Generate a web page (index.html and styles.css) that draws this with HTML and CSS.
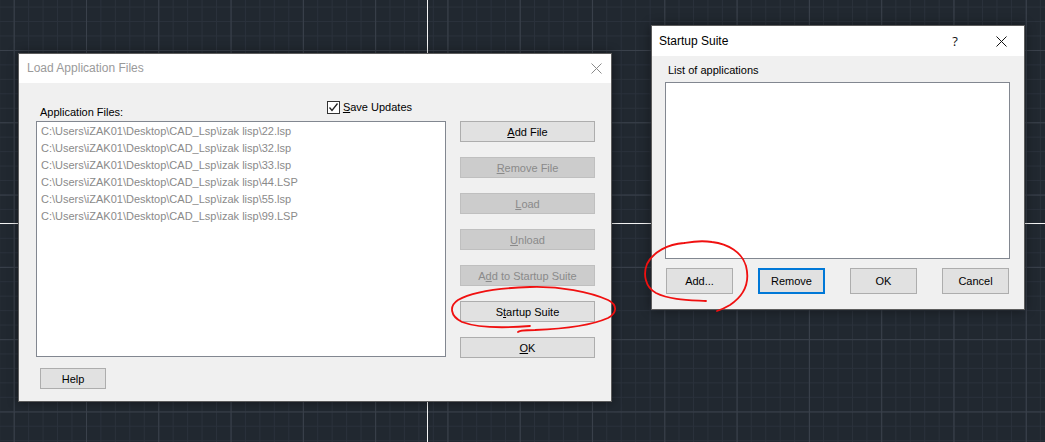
FILE: index.html
```html
<!DOCTYPE html>
<html lang="en">
<head>
  <meta charset="UTF-8">
  <meta name="viewport" content="width=device-width, initial-scale=1.0">
  <title>Load Application Files</title>
  <link rel="stylesheet" href="styles.css">
</head>
<body>
  <div class="desktop">
    <div class="cross-v"></div>
    <div class="cross-h"></div>

    <!-- Load Application Files (inactive) -->
    <div class="dialog dialog-load inactive">
      <div class="titlebar">
        <span class="title">Load Application Files</span>
        <span class="caption-btn small">
          <svg width="11" height="11" viewBox="0 0 11 11"><path d="M0.5 0.5 L10.5 10.5 M10.5 0.5 L0.5 10.5" stroke="#8a8a8a" stroke-width="1"/></svg>
        </span>
      </div>
      <div class="body">
        <div class="main">
          <div class="files">
            <div class="files-head">
              <span class="label">Application Files:</span>
              <label class="check">
                <span class="box">
                  <svg width="11" height="11" viewBox="0 0 11 11"><path d="M1.5 5.5 L4 8.5 L9.5 1.5" fill="none" stroke="#222" stroke-width="1.3"/></svg>
                </span>
                <span><u>S</u>ave Updates</span>
              </label>
            </div>
            <div class="listbox files-list">
              <div class="item">C:\Users\iZAK01\Desktop\CAD_Lsp\izak lisp\22.lsp</div>
              <div class="item">C:\Users\iZAK01\Desktop\CAD_Lsp\izak lisp\32.lsp</div>
              <div class="item">C:\Users\iZAK01\Desktop\CAD_Lsp\izak lisp\33.lsp</div>
              <div class="item">C:\Users\iZAK01\Desktop\CAD_Lsp\izak lisp\44.LSP</div>
              <div class="item">C:\Users\iZAK01\Desktop\CAD_Lsp\izak lisp\55.lsp</div>
              <div class="item">C:\Users\iZAK01\Desktop\CAD_Lsp\izak lisp\99.LSP</div>
            </div>
          </div>
          <div class="actions">
            <button class="btn"><u>A</u>dd File</button>
            <button class="btn" disabled><u>R</u>emove File</button>
            <button class="btn" disabled><u>L</u>oad</button>
            <button class="btn" disabled><u>U</u>nload</button>
            <button class="btn" disabled>A<u>d</u>d to Startup Suite</button>
            <button class="btn">S<u>t</u>artup Suite</button>
            <button class="btn"><u>O</u>K</button>
          </div>
        </div>
        <div class="footer">
          <button class="btn btn-help">Help</button>
        </div>
      </div>
    </div>

    <!-- Startup Suite (active) -->
    <div class="dialog dialog-suite">
      <div class="titlebar">
        <span class="title">Startup Suite</span>
        <span class="caption-btn help">?</span>
        <span class="caption-btn">
          <svg width="11" height="11" viewBox="0 0 11 11"><path d="M0.5 0.5 L10.5 10.5 M10.5 0.5 L0.5 10.5" stroke="#111" stroke-width="1"/></svg>
        </span>
      </div>
      <div class="body">
        <div class="label suite-label">List of applications</div>
        <div class="listbox suite-list"></div>
        <div class="suite-buttons">
          <button class="btn btn-wide">Add...</button>
          <button class="btn btn-wide focused">Remove</button>
          <button class="btn btn-wide">OK</button>
          <button class="btn btn-wide">Cancel</button>
        </div>
      </div>
    </div>

    <!-- red hand-drawn marks -->
    <svg class="marks" width="1045" height="442" viewBox="0 0 1045 442">
      <path d="M530 326 C505 328 478 328 462 322 C450 316 449 306 458 300 C472 292 500 288 530 287 C560 286 590 292 608 300 C618 305 617 313 608 318 C590 326 560 329 535 330 C525 330 518 331 518 332" />
      <path d="M706 301 C690 300 670 300 656 293 C645 287 643 274 647 264 C653 252 668 244 684 243 C690 242 700 240 712 242 C728 244 742 252 746 266 C750 282 745 295 730 305 C725 308 720 310 717 311" />
    </svg>
  </div>
</body>
</html>
```

FILE: styles.css
```css
:root {
  --canvas-bg: #212830;
  --grid-minor: #2a313b;
  --grid-major: #3a414b;
  --face: #f0f0f0;
  --btn-bg: #e1e1e1;
  --btn-border: #adadad;
  --btn-off-bg: #cccccc;
  --btn-off-border: #bfbfbf;
  --btn-off-text: #8a8a8a;
  --list-border: #828790;
  --focus: #0078d7;
}

* {
  box-sizing: border-box;
}

body {
  margin: 0;
  padding: 0;
  font-family: "Liberation Sans", Arial, sans-serif;
  font-size: 11px;
  color: #000;
  background: var(--canvas-bg);
  overflow: hidden;
}

.desktop {
  position: relative;
  width: 1045px;
  height: 442px;
  background-color: var(--canvas-bg);
  background-image:
    linear-gradient(to right, var(--grid-major) 1px, transparent 1px),
    linear-gradient(to bottom, var(--grid-major) 1px, transparent 1px),
    linear-gradient(to right, var(--grid-minor) 1px, transparent 1px),
    linear-gradient(to bottom, var(--grid-minor) 1px, transparent 1px);
  background-size:
    72.3px 100%,
    100% 72.3px,
    14.46px 100%,
    100% 14.46px;
  background-position:
    13.7px 0,
    0 50px,
    13.7px 0,
    0 6.6px;
}

.cross-v {
  position: absolute;
  left: 427px;
  top: 0;
  width: 1px;
  height: 442px;
  background: #f4f4f4;
}

.cross-h {
  position: absolute;
  left: 0;
  top: 223px;
  width: 1045px;
  height: 1px;
  background: #f4f4f4;
}

.dialog {
  position: absolute;
  display: flex;
  flex-direction: column;
  background: var(--face);
  border: 1px solid #5c5c5c;
  box-shadow: 0 0 10px rgba(0, 0, 0, 0.45);
}

.titlebar {
  display: flex;
  align-items: center;
  height: 30px;
  background: #fff;
  flex-shrink: 0;
}

.title {
  flex: 1;
  font-size: 12px;
  line-height: 30px;
  color: #000;
}

.inactive .title {
  color: #9a9a9a;
}

.caption-btn {
  display: flex;
  align-items: center;
  justify-content: center;
  width: 46px;
  height: 30px;
  font-size: 14px;
  color: #111;
}

.caption-btn.small {
  width: 29px;
}

.caption-btn.help {
  font-family: "Open Sans", "Liberation Sans", sans-serif;
  font-size: 13px;
}

.label {
  line-height: 16px;
}

.listbox {
  background: #fff;
  border: 1px solid var(--list-border);
}

.btn {
  display: flex;
  align-items: center;
  justify-content: center;
  margin: 0;
  padding: 0;
  font-family: inherit;
  font-size: 11px;
  color: #000;
  background: var(--btn-bg);
  border: 1px solid var(--btn-border);
}

.btn:disabled {
  background: var(--btn-off-bg);
  border-color: var(--btn-off-border);
  color: var(--btn-off-text);
}

/* Load Application Files */

.dialog-load {
  left: 18px;
  top: 53px;
  width: 594px;
  height: 349px;
}

.dialog-load .titlebar {
  padding-left: 8px;
  height: 29px;
}

.dialog-load .title {
  line-height: 29px;
}

.dialog-load .body {
  padding: 0 0 0 17px;
}

.main {
  display: flex;
  gap: 14px;
}

.files {
  width: 410px;
}

.files-head {
  display: flex;
  align-items: flex-end;
  height: 38px;
}

.files-head .label {
  padding-left: 4px;
  margin-bottom: 1px;
}

.check {
  display: flex;
  align-items: center;
  gap: 3px;
  margin-left: auto;
  margin-right: 34px;
  margin-bottom: 7px;
  line-height: 14px;
}

.box {
  display: flex;
  align-items: center;
  justify-content: center;
  width: 13px;
  height: 13px;
  background: #fff;
  border: 1px solid #333;
}

.files-list {
  height: 236px;
  padding: 1px 0 0 4px;
}

.item {
  line-height: 17px;
  color: #8a8a8a;
  white-space: nowrap;
}

.actions {
  display: flex;
  flex-direction: column;
  gap: 15px;
  width: 135px;
  padding-top: 38px;
}

.actions .btn {
  height: 21px;
}

.footer {
  margin-top: 10px;
  padding-left: 4px;
}

.btn-help {
  width: 66px;
  height: 21px;
}

/* Startup Suite */

.dialog-suite {
  left: 651px;
  top: 25px;
  width: 374px;
  height: 285px;
}

.dialog-suite .titlebar {
  padding-left: 7px;
}

.dialog-suite .body {
  display: flex;
  flex-direction: column;
}

.suite-label {
  height: 26px;
  padding: 6px 0 0 16px;
}

.suite-list {
  width: 345px;
  height: 177px;
  margin-left: 13px;
}

.suite-buttons {
  display: flex;
  justify-content: space-between;
  width: 343px;
  margin: 9px 0 0 14px;
}

.btn-wide {
  width: 67px;
  height: 26px;
}

.btn.focused {
  border: 2px solid var(--focus);
}

.marks {
  position: absolute;
  left: 0;
  top: 0;
  pointer-events: none;
}

.marks path {
  fill: none;
  stroke: #f01010;
  stroke-width: 1.8;
  stroke-linecap: round;
}
```
